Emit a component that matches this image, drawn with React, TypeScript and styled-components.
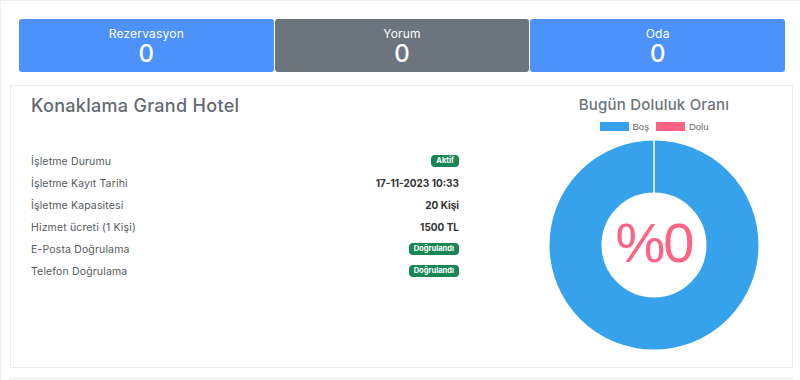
import styled, { createGlobalStyle } from "styled-components";

const GlobalStyle = createGlobalStyle`
  html, body {
    margin: 0;
    padding: 0;
    background: #fff;
  }
  body {
    font-family: "Inter", "Noto Sans", sans-serif;
  }
`;

// #region ::: STYLES
const Page = styled.div`
  width: 800px;
  height: 380px;
  box-sizing: border-box;
  overflow: hidden;
  border-top: 1px solid #eeeeee;
  border-left: 1px solid #eeeeee;
  padding: 18px 7px 0 9px;
`;

const StatsRow = styled.div`
  display: grid;
  grid-template-columns: repeat(3, 1fr);
  gap: 1px;
  margin: 0 8px 0 9px;
`;

const StatCard = styled.div<{ $tone: "primary" | "secondary" }>`
  height: 53px;
  border-radius: 3px;
  background: ${(p) => (p.$tone === "primary" ? "#4d92fb" : "#6c757d")};
  color: #fff;
  display: flex;
  flex-direction: column;
  align-items: center;
  justify-content: center;
`;

const StatLabel = styled.div`
  font-size: 12px;
  line-height: 15px;
  margin-top: 1px;
  letter-spacing: 0.2px;
`;

const StatValue = styled.div`
  font-size: 24px;
  line-height: 26px;
  font-weight: 500;
`;

const Card = styled.section`
  margin-top: 13px;
  height: 283px;
  box-sizing: border-box;
  border: 1px solid #eaeaea;
  padding: 8px 20px 0 20px;
  display: grid;
  grid-template-columns: 428px 1fr;
  column-gap: 77px;
`;

const NextCard = styled.section`
  margin-top: 10px;
  height: 30px;
  border: 1px solid #eaeaea;
`;

const InfoColumn = styled.div`
  display: flex;
  flex-direction: column;
`;

const HotelTitle = styled.h2`
  margin: 0;
  font-size: 18px;
  line-height: 24px;
  font-weight: 500;
  letter-spacing: 0.3px;
  color: #636a72;
`;

const InfoList = styled.div`
  margin-top: 32px;
  display: flex;
  flex-direction: column;
`;

const InfoRow = styled.div`
  height: 22px;
  display: flex;
  align-items: center;
  justify-content: space-between;
  font-size: 10.5px;
`;

const InfoLabel = styled.span`
  color: #555a60;
  letter-spacing: 0.15px;
`;

const InfoValue = styled.span`
  color: #333;
  font-size: 10px;
  font-weight: 700;
`;

const Badge = styled.span`
  background: #198754;
  color: #fff;
  font-size: 7.5px;
  font-weight: 700;
  line-height: 12px;
  padding: 0 5px;
  border-radius: 4px;
`;

const ChartColumn = styled.div`
  display: flex;
  flex-direction: column;
  align-items: center;
`;

const ChartTitle = styled.h3`
  margin: 0;
  font-size: 15px;
  line-height: 22px;
  font-weight: 500;
  letter-spacing: 0.2px;
  color: #6c757d;
`;

const Legend = styled.div`
  margin-top: 5px;
  display: flex;
  align-items: center;
  gap: 7px;
  font-family: "Liberation Sans", Arial, sans-serif;
  font-size: 9.5px;
  color: #666;
`;

const LegendItem = styled.span`
  display: flex;
  align-items: center;
  gap: 4px;
`;

const LegendSwatch = styled.span<{ $color: string }>`
  width: 29px;
  height: 9px;
  background: ${(p) => p.$color};
`;

const Donut = styled.div`
  margin-top: 8px;
  display: grid;
  width: 210px;
  height: 210px;
  place-items: center;

  & > * {
    grid-area: 1 / 1;
  }
`;

const DonutText = styled.span`
  font-family: "Liberation Sans", Arial, sans-serif;
  font-size: 56px;
  color: #ff6384;
  margin-top: -6px;
  letter-spacing: -2px;
`;
// #endregion ::: STYLES

const STATS = [
  { label: "Rezervasyon", value: 0, tone: "primary" as const },
  { label: "Yorum", value: 0, tone: "secondary" as const },
  { label: "Oda", value: 0, tone: "primary" as const },
];

const INFO = [
  { label: "İşletme Durumu", badge: "Aktif" },
  { label: "İşletme Kayıt Tarihi", value: "17-11-2023 10:33" },
  { label: "İşletme Kapasitesi", value: "20 Kişi" },
  { label: "Hizmet ücreti (1 Kişi)", value: "1500 TL" },
  { label: "E-Posta Doğrulama", badge: "Doğrulandı" },
  { label: "Telefon Doğrulama", badge: "Doğrulandı" },
];

export default function App() {
  return (
    <>
      <GlobalStyle />
      <Page>
        <StatsRow>
          {STATS.map((s) => (
            <StatCard key={s.label} $tone={s.tone}>
              <StatLabel>{s.label}</StatLabel>
              <StatValue>{s.value}</StatValue>
            </StatCard>
          ))}
        </StatsRow>

        <Card>
          <InfoColumn>
            <HotelTitle>Konaklama Grand Hotel</HotelTitle>
            <InfoList>
              {INFO.map((row) => (
                <InfoRow key={row.label}>
                  <InfoLabel>{row.label}</InfoLabel>
                  {row.badge ? (
                    <Badge>{row.badge}</Badge>
                  ) : (
                    <InfoValue>{row.value}</InfoValue>
                  )}
                </InfoRow>
              ))}
            </InfoList>
          </InfoColumn>

          <ChartColumn>
            <ChartTitle>Bugün Doluluk Oranı</ChartTitle>
            <Legend>
              <LegendItem>
                <LegendSwatch $color="#36a2eb" />
                Boş
              </LegendItem>
              <LegendItem>
                <LegendSwatch $color="#ff6384" />
                Dolu
              </LegendItem>
            </Legend>
            <Donut>
              <svg width="210" height="210" viewBox="0 0 210 210">
                <circle
                  cx="105"
                  cy="105"
                  r="78.5"
                  fill="none"
                  stroke="#36a2eb"
                  strokeWidth="52"
                />
                <line
                  x1="105"
                  y1="0"
                  x2="105"
                  y2="54"
                  stroke="#fff"
                  strokeWidth="1.5"
                />
              </svg>
              <DonutText>%0</DonutText>
            </Donut>
          </ChartColumn>
        </Card>

        <NextCard />
      </Page>
    </>
  );
}
